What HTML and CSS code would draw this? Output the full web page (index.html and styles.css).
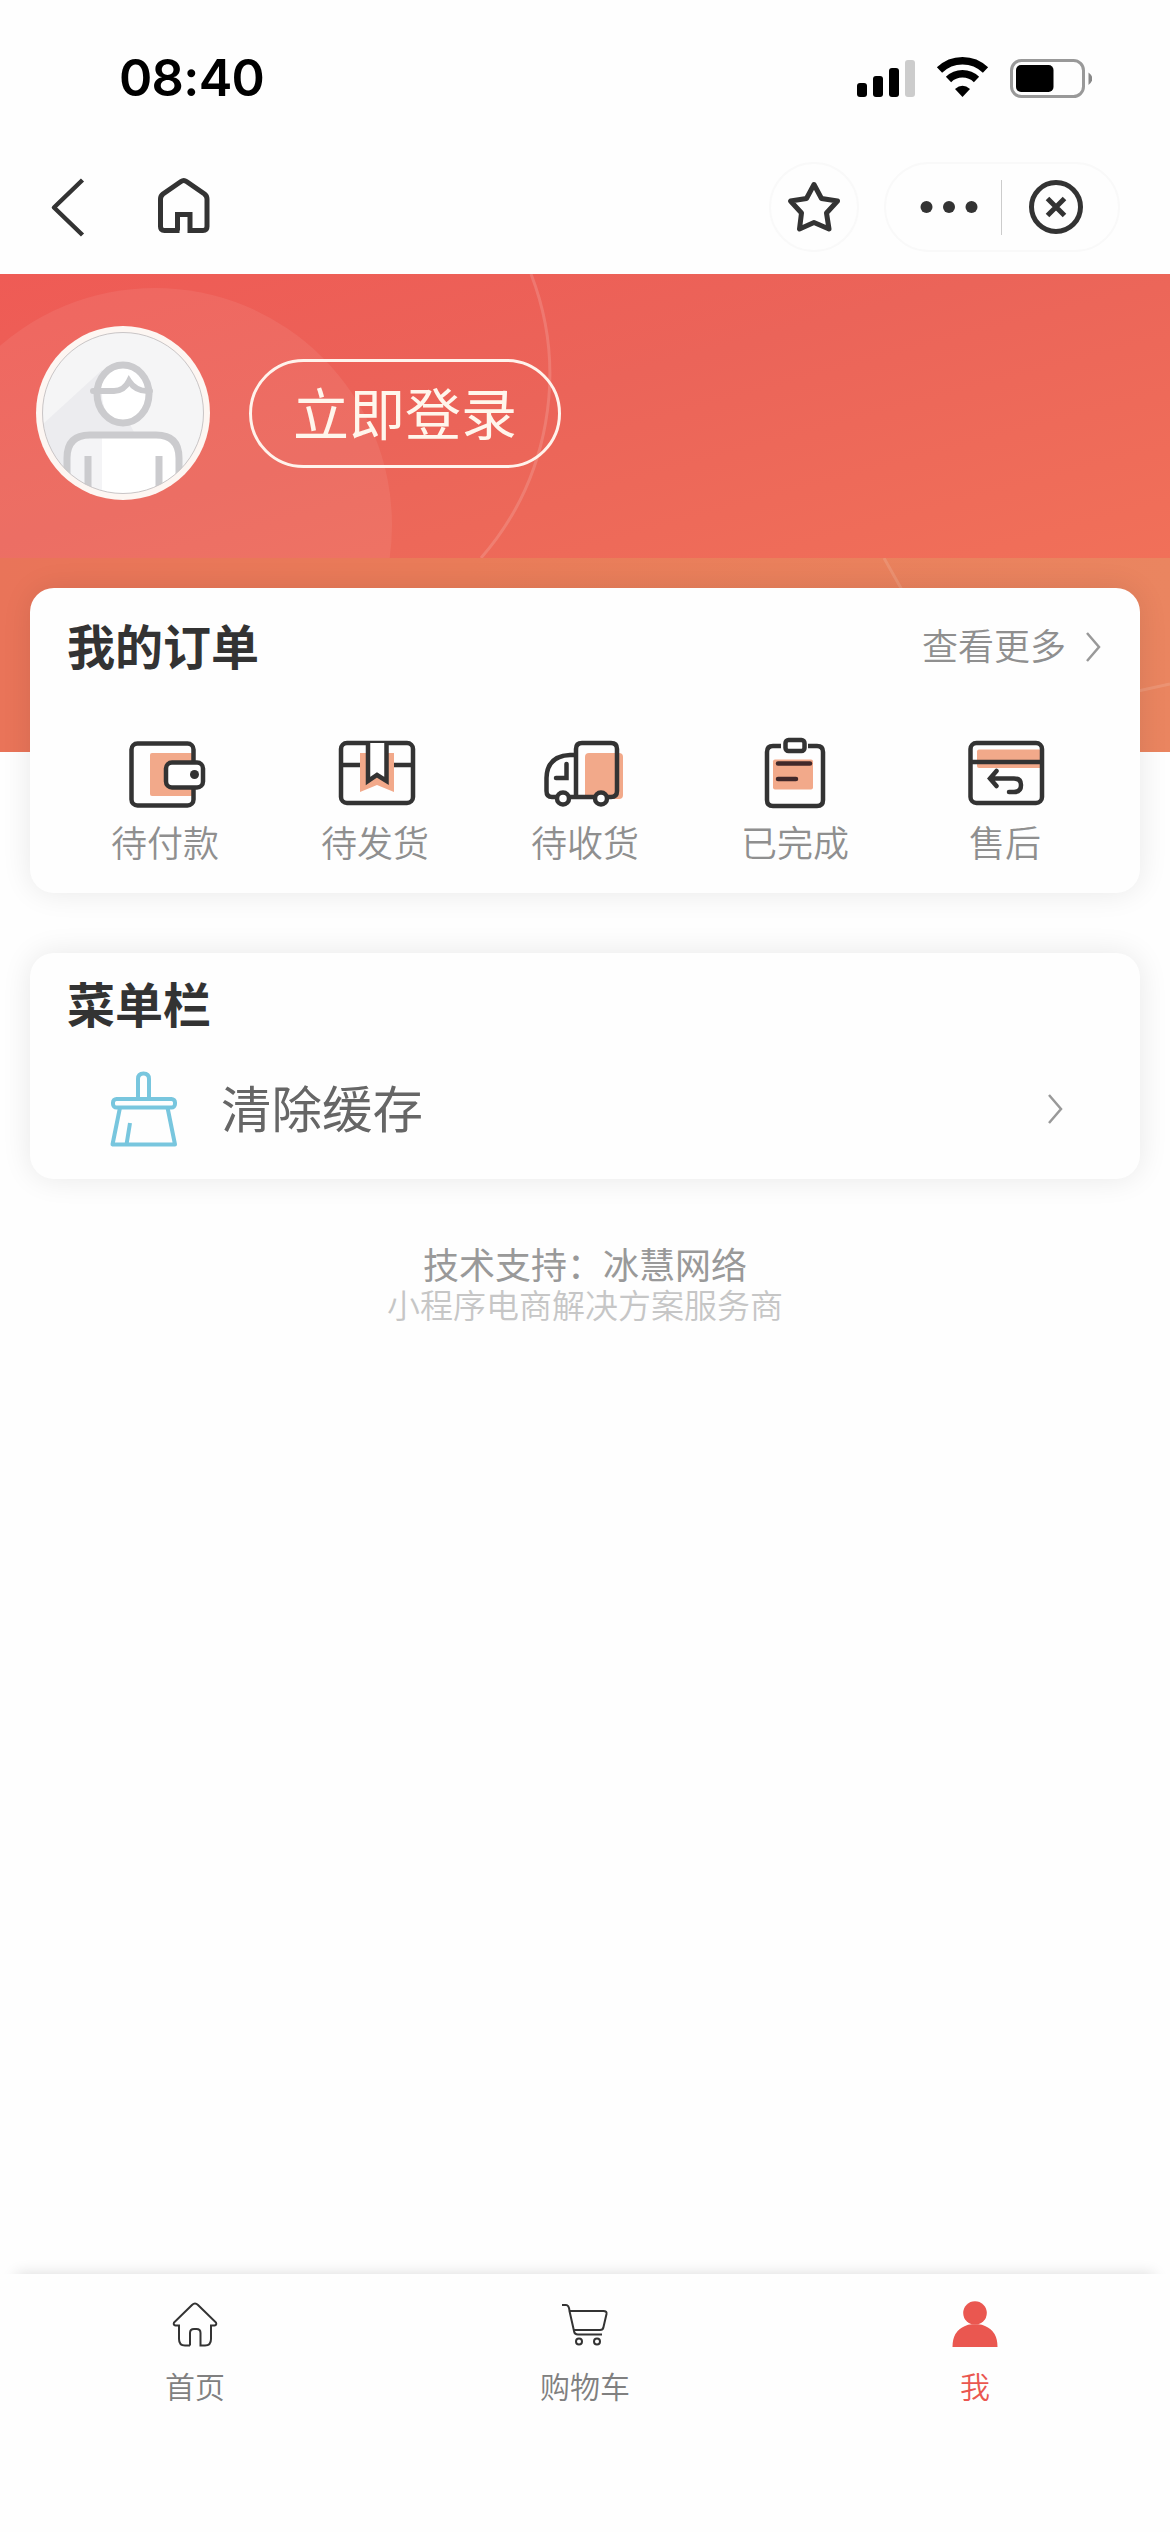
FILE: index.html
```html
<!DOCTYPE html>
<html lang="zh-CN">
<head>
<meta charset="utf-8">
<title>我</title>
<link rel="stylesheet" href="styles.css">
</head>
<body>
<div class="screen">
  <header class="status">
    <span class="clock">08:40</span>
    <svg class="status-icons" width="240" height="44" viewBox="0 0 240 44">
      <rect x="5" y="27" width="10" height="14" rx="3"/>
      <rect x="21" y="20" width="10" height="21" rx="3"/>
      <rect x="37" y="12" width="10" height="29" rx="3"/>
      <rect x="53" y="4" width="10" height="37" rx="3" fill="#ccc"/>
      <path d="M87.500 14A33 33 0 0 1 133.500 14" fill="none" stroke="#000" stroke-width="7.500"/>
      <path d="M96.500 23.500A20 20 0 0 1 124.500 23.500" fill="none" stroke="#000" stroke-width="7.500"/>
      <path d="M103 33Q110.500 26.500 118 33L110.500 41Z"/>
      <rect x="159.500" y="4.500" width="72" height="36" rx="10" fill="none" stroke="#999" stroke-width="3"/>
      <rect x="164" y="9" width="37.500" height="27" rx="5"/>
      <path d="M236.500 16.500Q244.500 22.500 236.500 29Z" fill="#888"/>
    </svg>
  </header>

  <nav class="nav">
    <svg class="back" width="40" height="64" viewBox="0 0 40 64">
      <path d="M36.500 5L8 32.500L36.500 60" fill="none" stroke="#333" stroke-width="4.500" stroke-linejoin="round"/>
    </svg>
    <svg class="home" width="60" height="64" viewBox="0 0 60 64">
      <path d="M25.500 55.500H10.500Q6.500 55.500 6.500 51.500V24Q6.500 21 9 19L27 6.500Q29.800 4.500 32.500 6.500L50.500 19Q53 21 53 24V51.500Q53 55.500 49 55.500H36V39.500H23.500V55.500" fill="none" stroke="#333" stroke-width="5"/>
    </svg>
    <div class="round-btn">
      <svg width="60" height="60" viewBox="0 0 60 60">
        <path d="M30 7.500L37.500 21.500L53.500 24L42.500 36L45 52L30 45.500L15.500 52L17.500 36L6.500 24L22.500 21.500Z" fill="none" stroke="#333" stroke-width="5" stroke-linejoin="round"/>
      </svg>
    </div>
    <div class="capsule">
      <svg width="60" height="60" viewBox="0 0 60 60" fill="#333"><circle cx="7.500" cy="30" r="6"/><circle cx="30" cy="30" r="6"/><circle cx="52.500" cy="30" r="6"/></svg>
      <i class="divider"></i>
      <svg width="60" height="60" viewBox="0 0 60 60" fill="none" stroke="#333" stroke-width="5"><circle cx="30" cy="30" r="24.500"/><path d="M21.500 21.500L38.500 38.500M38.500 21.500L21.500 38.500"/></svg>
    </div>
  </nav>

  <section class="profile">
    <svg class="backdrop" width="1170" height="284" viewBox="0 0 1170 284">
      <circle cx="155" cy="251" r="237" fill="#fff" fill-opacity=".07"/>
      <path d="M531 0A279 279 0 0 1 481 284" fill="none" stroke="#fff" stroke-opacity=".15" stroke-width="3"/>
    </svg>
    <svg class="avatar" width="174" height="174" viewBox="0 0 174 174">
      <defs><clipPath id="face"><circle cx="87" cy="87" r="80.500"/></clipPath></defs>
      <circle cx="87" cy="87" r="87" fill="#fdf6f2"/>
      <g clip-path="url(#face)">
        <rect width="174" height="174" fill="#f5f5f6"/>
        <path d="M66 44L7 98V174H60L100 110Z" fill="#ececef"/>
        <ellipse cx="87" cy="68" rx="25.500" ry="29" fill="#fff"/>
        <path d="M31 174V132Q31 110 54 110H120Q143 110 143 132V174Z" fill="#fff"/>
        <path d="M33 174V132Q33 114 50 112H66V174Z" fill="#f4f4f6"/>
        <path d="M66 68Q66 88 82 96Q66 92 62 68Z" fill="#eeeef1"/>
        <g fill="none" stroke="#cbcbce" stroke-width="7" stroke-linecap="round">
          <ellipse cx="87" cy="68" rx="26" ry="29"/>
          <path d="M57 65H78Q88 65 93 55Q100 66 114 65" stroke-width="6"/>
          <path d="M31 174V132Q31 109 54 109H120Q143 109 143 132V174"/>
          <path d="M52 130V174M123 130V174" stroke-linecap="butt"/>
        </g>
      </g>
      <circle cx="87" cy="87" r="80.500" fill="none" stroke="#c9c5c6" stroke-width="1"/>
    </svg>
    <a class="login">立即登录</a>
  </section>

  <main class="content">
    <svg class="backdrop" width="1170" height="194" viewBox="0 0 1170 194">
      <path d="M884 0L902 32M1138 133L1170 126" fill="none" stroke="#fff" stroke-opacity=".12" stroke-width="3"/>
    </svg>
    <section class="card orders">
      <div class="card-head">
        <h2>我的订单</h2>
        <span class="more">查看更多
          <svg width="16" height="32" viewBox="0 0 16 32"><path d="M2 2L14 16L2 30" fill="none" stroke="#999" stroke-width="2.500"/></svg>
        </span>
      </div>
      <div class="order-types">
        <div class="type">
          <svg width="90" height="80" viewBox="0 0 90 80">
            <rect x="30" y="18" width="43" height="43" rx="2" fill="#f2a98a"/>
            <rect x="11.500" y="8.500" width="62" height="62" rx="6"/>
            <rect x="46" y="27.500" width="37" height="25" rx="6" fill="#fff"/>
            <circle cx="74.500" cy="39.500" r="4.500" fill="#333" stroke="none"/>
          </svg>
          <span>待付款</span>
        </div>
        <div class="type">
          <svg width="90" height="80" viewBox="0 0 90 80">
            <path d="M30 18H64V57L47 50L30 57Z" fill="#f2a98a" stroke="none"/>
            <rect x="11" y="8" width="72" height="60" rx="6"/>
            <path d="M11 30H30M64 30H83"/>
            <path d="M38 8V46L47 40L56.500 46V8" fill="#fff"/>
          </svg>
          <span>待发货</span>
        </div>
        <div class="type">
          <svg width="90" height="80" viewBox="0 0 90 80">
            <rect x="45" y="18" width="38" height="46" rx="4" fill="#f2a98a"/>
            <path d="M36 62V14Q36 8 42 8H71Q77 8 77 14V56Q77 62 71 62H12Q6.500 62 6.500 56V43Q7 21 30 20H36"/>
            <path d="M26.500 29V43H16" stroke-linecap="round"/>
            <circle cx="23" cy="63.500" r="6" fill="#fff"/><circle cx="61" cy="63.500" r="6" fill="#fff"/>
          </svg>
          <span>待收货</span>
        </div>
        <div class="type">
          <svg width="90" height="80" viewBox="0 0 90 80">
            <rect x="23" y="24.500" width="40" height="30" rx="2" fill="#f2a98a"/>
            <path d="M31 11H23Q17 11 17 17V65Q17 71 23 71H67Q73 71 73 65V17Q73 11 67 11H58"/>
            <rect x="35.500" y="5" width="19" height="11" rx="3"/>
            <path d="M28 28.500H60M28 44H46" stroke="#40282a" stroke-linecap="round"/>
          </svg>
          <span>已完成</span>
        </div>
        <div class="type">
          <svg width="90" height="80" viewBox="0 0 90 80">
            <rect x="17" y="14.500" width="65" height="18.500" rx="2" fill="#f2a98a"/>
            <rect x="10.500" y="8" width="71.500" height="60" rx="6"/>
            <path d="M10.500 27H82"/>
            <path d="M36.500 36L30 43.500L36.500 51M31 43.500H54Q61 43.500 61 50Q61 57 54 57H49" stroke-linecap="round"/>
          </svg>
          <span>售后</span>
        </div>
      </div>
    </section>

    <section class="card menu">
      <div class="card-head"><h2>菜单栏</h2></div>
      <div class="menu-row">
        <svg class="broom" width="70" height="80" viewBox="0 0 70 80">
          <g fill="none" stroke="#78c6de" stroke-width="4" stroke-linejoin="round">
            <path d="M29 29.500V10Q29 4.500 34.500 4.500Q40 4.500 40 10V29.500"/>
            <rect x="4" y="30" width="62" height="8.500" rx="3.500"/>
            <path d="M11 38.500L3.500 75.500H66L58.500 38.500M21 54L17.500 75.500"/>
          </g>
        </svg>
        <span class="menu-text">清除缓存</span>
        <svg width="16" height="32" viewBox="0 0 16 32"><path d="M2 2L14 16L2 30" fill="none" stroke="#999" stroke-width="2.500"/></svg>
      </div>
    </section>

    <footer class="support">
      <p>技术支持：冰慧网络</p>
      <p class="sub">小程序电商解决方案服务商</p>
    </footer>
  </main>

  <nav class="tabs">
    <a class="tab">
      <svg width="50" height="50" viewBox="0 0 50 50"><path d="M20 45.500V33Q20 29 24 29H26.500Q30.500 29 30.500 33V45.500H35Q41 45.500 41 39V25.500H44.500Q47 25 46 22.500L28 5Q25 2 22 5L4 22.500Q3 25 5.500 25.500H9V39Q9 45.500 15 45.500H20" fill="none" stroke="#333" stroke-width="2"/></svg>
      <span>首页</span>
    </a>
    <a class="tab">
      <svg width="50" height="50" viewBox="0 0 50 50" fill="none" stroke="#333" stroke-width="2"><path d="M2 5H6Q9 5 9.500 11L14 31Q14.500 34.500 18 34.500H42M9.500 11H43.500Q47 11 46.500 14L43.500 27Q43 30 40 30H13.500"/><circle cx="19" cy="41.500" r="3"/><circle cx="37" cy="41.500" r="3"/></svg>
      <span>购物车</span>
    </a>
    <a class="tab active">
      <svg width="50" height="50" viewBox="0 0 50 50" fill="#ea5750"><circle cx="25" cy="13" r="11.800"/><path d="M2.500 47Q2.500 31 15 26Q19 23.500 25 24.500Q31 23.500 35 26Q47.500 31 47.500 47Z"/></svg>
      <span>我</span>
    </a>
  </nav>
</div>
</body>
</html>
```

FILE: styles.css
```css
* { box-sizing: border-box; }

body {
  margin: 0;
  background: #fefefe;
  font-family: "Noto Sans CJK SC", sans-serif;
  font-weight: 350;
}

h2, p { margin: 0; }
svg { display: block; flex: none; }

.screen {
  display: flex;
  flex-direction: column;
  width: 1170px;
  height: 2532px;
  overflow: hidden;
}

.status {
  display: flex;
  justify-content: space-between;
  align-items: center;
  height: 156px;
  padding: 0 78px 0 119px;
}
.clock {
  font: 600 50.500px/60px Inter, sans-serif;
  letter-spacing: -0.7px;
  color: #000;
}

.nav {
  display: flex;
  align-items: center;
  height: 118px;
  padding: 0 50px 16px 46px;
}
.home { margin-left: 68px; }
.round-btn {
  display: flex;
  align-items: center;
  justify-content: center;
  width: 90px;
  height: 90px;
  margin-left: auto;
  border: 2px solid #f9f9f9;
  border-radius: 50%;
}
.capsule {
  display: flex;
  align-items: center;
  justify-content: space-between;
  width: 236px;
  height: 90px;
  margin-left: 25px;
  padding: 0 32px 0 33px;
  border: 2px solid #f9f9f9;
  border-radius: 45px;
}
.divider {
  width: 1px;
  height: 55px;
  margin-left: -2px;
  background: #ccc;
}

.profile {
  position: relative;
  display: flex;
  align-items: center;
  height: 284px;
  padding: 0 36px 6px;
  background: linear-gradient(165deg, #ef5b55 0%, #eb6459 45%, #f17059 100%);
}
.backdrop {
  position: absolute;
  top: 0;
  left: 0;
}
.avatar, .login, .card { position: relative; }
.login {
  width: 312px;
  height: 109px;
  margin-left: 39px;
  border: 3px solid #fff3ec;
  border-radius: 55px;
  color: #fff6ec;
  font-size: 56px;
  font-weight: 400;
  line-height: 98px;
  text-align: center;
}

.content {
  position: relative;
  flex: 1;
  padding: 30px 30px 0;
  background: linear-gradient(90deg, #e97459, #e97c59 40%, #ea8560) 0 0 / 100% 194px no-repeat;
}
.card {
  border-radius: 24px;
  background: #fefefe;
  box-shadow: 0 0 30px rgba(0, 0, 0, .09);
}
.orders { height: 305px; }
.card-head {
  display: flex;
  align-items: center;
  justify-content: space-between;
  height: 112px;
  padding: 0 39px 0 37px;
}
.card-head h2 {
  color: #333;
  font-size: 48px;
  font-weight: 700;
  line-height: 60px;
}
.more {
  display: flex;
  align-items: center;
  gap: 19px;
  color: #8f8f8f;
  font-size: 36px;
}
.more svg { margin-top: 6px; }
.order-types {
  display: grid;
  grid-template-columns: repeat(5, 1fr);
  padding: 35px 30px 0;
}
.type {
  display: flex;
  flex-direction: column;
  align-items: center;
  color: #8f8f8f;
  font-size: 36px;
  line-height: 52px;
}
.type svg { fill: none; stroke: #333; stroke-width: 4.5; }
.type svg [fill="#f2a98a"] { stroke: none; }

.menu {
  height: 226px;
  margin-top: 60px;
}
.menu .card-head { height: 98px; }
.menu-row {
  display: flex;
  align-items: center;
  height: 116px;
  padding: 0 77px 0 79px;
}
.menu-text {
  flex: 1;
  margin-left: 42px;
  padding-bottom: 6px;
  color: #666;
  font-size: 50.500px;
  font-weight: 400;
  line-height: 70px;
}

.support {
  padding-top: 64px;
  color: #999;
  font-size: 36px;
  font-weight: 400;
  line-height: 40px;
  text-align: center;
}
.support .sub {
  color: #c6c6c6;
  font-size: 33px;
  font-weight: 350;
  line-height: 42px;
}

.tabs {
  position: relative;
  display: grid;
  grid-template-columns: repeat(3, 1fr);
  height: 258px;
  padding-top: 26px;
  background: #fefefe;
  box-shadow: 0 -16px 14px -16px rgba(0, 0, 0, .14);
}
.tab {
  display: flex;
  flex-direction: column;
  align-items: center;
  gap: 15px;
  color: #808080;
  font-size: 30px;
  line-height: 40px;
}
.tab.active { color: #ea5750; }
```
